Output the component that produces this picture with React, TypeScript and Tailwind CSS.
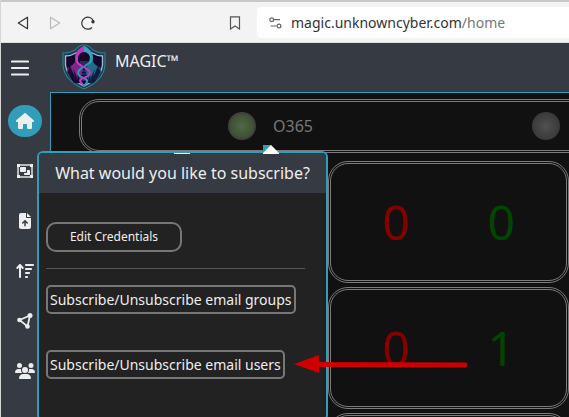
import type { ReactNode } from "react";
import {
  FaArrowUpWideShort,
  FaFileArrowUp,
  FaHouse,
  FaUsers,
} from "react-icons/fa6";

function Logo() {
  return (
    <svg width="44" height="46" viewBox="0 0 44 46" fill="none" aria-hidden="true">
      <path d="M1 9 Q8 9 13 6 Q17 1 22 1 Q27 1 31 6 Q36 9 43 9 V21 Q42 36 22 45 Q2 36 1 21Z" fill="#173d51" stroke="#2b7f96" strokeWidth="1.2" />
      <path d="M3.5 12 Q9 12 14 9 H30 Q35 12 40.5 12 V21 Q39 34 22 42 Q5 34 3.5 21Z" fill="#12082c" stroke="#aab4c6" strokeWidth="1.4" />
      <path d="M14 17 Q12 7 22 1.5 V8 Q15 11 16 19 L21 25 L18 35 L20 39 Q8 34 5 24 Q9 23 14 17Z" fill="#7b2a8c" />
      <path d="M30 17 Q32 7 22 1.5 V8 Q29 11 28 19 L23 25 L26 35 L24 39 Q36 34 39 24 Q35 23 30 17Z" fill="#246c8b" />
      <path d="M13.5 18 Q11 7 22 2 V8 Q15 10 16 19Z" fill="#c136c3" />
      <path d="M30.5 18 Q33 7 22 2 V8 Q29 10 28 19Z" fill="#37a3c0" />
      <ellipse cx="22" cy="15" rx="6.2" ry="7" fill="#160727" />
      <path d="M8 22L13 33L11 24L16 36L15 27L19 39H12L5 28Z" fill="#190735" />
      <path d="M36 22L31 33L33 24L28 36L29 27L25 39H32L39 28Z" fill="#0d1d42" />
      <path d="M18 18h9M18 20h8M19 27h7M18 30h8M19 36h6" stroke="#514594" />
      <path d="M28.5 14C31 22 16 22 16 29C16 34 27 34 25 38L22 42" stroke="#299bb7" strokeWidth="2" />
      <path d="M15 14C13 23 28 23 28 29C28 34 18 33 18 37L22 42" stroke="#c03cc4" strokeWidth="2" />
    </svg>
  );
}

function GroupIcon() {
  return (
    <svg width="16" height="14" viewBox="0 0 16 14" fill="none" aria-hidden="true">
      <rect x="1" y="1" width="14" height="12" stroke="#eee" strokeWidth="1.4" />
      <path d="M0 0h3v3H0zM13 0h3v3h-3zM0 11h3v3H0zM13 11h3v3h-3z" fill="#eee" />
      <rect x="3" y="3" width="6" height="5" rx=".8" fill="#eee" />
      <path d="M10 6h2.2a.8.8 0 0 1 .8.8V10.200a.8.8 0 0 1-.8.8H7.800a.8.8 0 0 1-.8-.8V9h2.200a.8.8 0 0 0 .8-.8Z" fill="#eee" />
    </svg>
  );
}

function NodesIcon() {
  return (
    <svg width="16" height="16" viewBox="0 0 16 16" fill="none" aria-hidden="true">
      <path d="M2.500 7L13 2.500L10.500 13.500Z" stroke="#eee" strokeWidth="1.800" />
      <circle cx="2.500" cy="7" r="2.300" fill="#eee" />
      <circle cx="13" cy="2.600" r="2.500" fill="#eee" />
      <circle cx="10.500" cy="13.500" r="2.300" fill="#eee" />
    </svg>
  );
}

function SideLink({ label, active, children }: { label: string; active?: boolean; children: ReactNode }) {
  return (
    <li className="flex h-[50px] items-center justify-center">
      <a
        href="#"
        aria-label={label}
        className={
          active
            ? "flex h-8 w-[34px] items-center justify-center rounded-full bg-[#319db8]"
            : "flex h-8 w-[34px] items-center justify-center"
        }
      >
        {children}
      </a>
    </li>
  );
}

function CountCard({ bad, good }: { bad?: number; good?: number }) {
  return (
    <section className="flex h-[122px] shrink-0 items-center justify-around rounded-[20px] border-[3px] border-double border-[#7b7b7b] px-3 text-5xl leading-none">
      <span className="w-[54px] text-center text-[#830000]">{bad}</span>
      <span className="w-[54px] text-center text-[#004500]">{good}</span>
    </section>
  );
}

export default function App() {
  return (
    <div className="relative flex h-screen flex-col overflow-hidden border-l border-[#d5d6d6] bg-[#111] font-['Noto_Sans',sans-serif] text-[#eee]">
      <div className="flex h-[43px] shrink-0 items-center border-b border-[#d9e0de] bg-[#f3f3f3] text-[#333]">
        <div className="flex h-full grow items-center border-t-2 border-[#c7c9c8] pt-px">
          <nav className="flex w-[228px] shrink-0 items-center pl-4">
            <button type="button" aria-label="Back">
              <svg width="12" height="14" viewBox="0 0 12 14" fill="none" stroke="#333" strokeWidth="1.2" strokeLinejoin="round"><path d="M10.5 1.2V12.8L1.3 7Z" /></svg>
            </button>
            <button type="button" aria-label="Forward" className="ml-5">
              <svg width="12" height="14" viewBox="0 0 12 14" fill="none" stroke="#bbb" strokeWidth="1.2" strokeLinejoin="round"><path d="M1.5 1.2V12.8L10.7 7Z" /></svg>
            </button>
            <button type="button" aria-label="Reload" className="ml-5">
              <svg width="14" height="14" viewBox="0 0 14 14" fill="none" stroke="#333" strokeWidth="1.2"><path d="M11 11.5A6 6 0 1 1 12.4 5" /><circle cx="12" cy="5.8" r="1.7" fill="#333" stroke="none" /></svg>
            </button>
          </nav>
          <button type="button" aria-label="Bookmark" className="mr-4">
            <svg width="12" height="14" viewBox="0 0 12 14" fill="none" stroke="#555" strokeWidth="1.2"><path d="M1.5 .8H10.5V13L6 10L1.5 13Z" /></svg>
          </button>
          <div className="flex h-[31px] grow items-center gap-[9px] rounded-l bg-white pl-3">
            <svg width="13" height="12" viewBox="0 0 13 12" fill="none" stroke="#666" strokeWidth="1.2" aria-hidden="true"><circle cx="2.7" cy="2.7" r="1.9" /><path d="M5 2.7h6M1.5 9h6" /><circle cx="10" cy="9" r="1.9" /></svg>
            <p className="text-sm leading-5">magic.unknowncyber.com<span className="text-[#777]">/home</span></p>
          </div>
        </div>
      </div>

      <header className="flex h-[49px] shrink-0 items-start bg-[#363a42]">
        <button type="button" aria-label="Menu" className="ml-2.5 mt-[17px]">
          <svg width="18" height="16" viewBox="0 0 18 16" aria-hidden="true"><path d="M1 1.500H17M1 8H17M1 14.500H17" stroke="#eee" strokeWidth="2.200" strokeLinecap="round" /></svg>
        </button>
        <div className="ml-[33px] mt-px"><Logo /></div>
        <h1 className="ml-[9px] mt-1.5 text-base leading-6">MAGIC™</h1>
      </header>

      <div className="flex min-h-0 grow">
        <nav className="w-[49px] shrink-0 bg-[#363a42] pr-0.5 pt-1">
          <ul>
            <SideLink label="Home" active><FaHouse size={18} /></SideLink>
            <SideLink label="Groups"><GroupIcon /></SideLink>
            <SideLink label="Upload"><FaFileArrowUp size={16} /></SideLink>
            <SideLink label="Sort"><FaArrowUpWideShort size={18} /></SideLink>
            <SideLink label="Relations"><NodesIcon /></SideLink>
            <SideLink label="Users"><FaUsers size={20} /></SideLink>
          </ul>
        </nav>

        <main className="flex min-w-0 grow flex-col gap-2 overflow-hidden border-l border-t border-[#319db8] pl-7 pt-1.5">
          <section className="-mr-8 flex h-[54px] shrink-0 items-center rounded-[20px] border-[3px] border-double border-[#7b7b7b] pl-[146px] pr-[38px]">
            <span className="size-7 rounded-full border-2 border-[#414141] bg-radial from-[#526649] to-[#344a28]" />
            <span className="ml-[17px] grow text-base leading-6 text-[#777]">O365</span>
            <span className="size-7 rounded-full bg-radial from-[#505050] to-[#303030]" />
          </section>
          <div className="flex flex-col gap-1 pl-[249px]">
            <CountCard bad={0} good={0} />
            <CountCard bad={0} good={1} />
            <CountCard />
          </div>
        </main>
      </div>

      <div role="dialog" aria-labelledby="subscribe-title" className="absolute -bottom-1 left-9 top-[151px] w-[291px] rounded-md border-2 border-[#319db8] bg-[#222]">
        <svg className="absolute -top-2 left-[224px]" width="16" height="9" viewBox="0 0 16 9" aria-hidden="true"><path d="M0 0H8V8H0Z" fill="#319db8" /><path d="M0 9V8L8 0L16 8V9Z" fill="#fff" /></svg>
        <span className="absolute left-[135px] top-0 h-px w-4 bg-white" />
        <h2 id="subscribe-title" className="h-10 rounded-t bg-[#363a42] text-center text-base leading-10">What would you like to subscribe?</h2>
        <div className="flex flex-col items-start pl-[7px] pr-[21px] pt-[29px]">
          <button type="button" className="h-[30px] w-[136px] rounded-[10px] border-2 border-[#777] text-xs">Edit Credentials</button>
          <hr className="mb-4 mt-4 w-full border-[#565656]" />
          <button type="button" className="h-[29px] rounded-[5px] border-2 border-[#777] px-0.5 text-sm">Subscribe/Unsubscribe email groups</button>
          <button type="button" className="mt-9 h-[29px] rounded-[5px] border-2 border-[#777] px-0.5 text-sm">Subscribe/Unsubscribe email users</button>
        </div>
      </div>

      <svg className="pointer-events-none absolute left-[293px] top-[354px]" width="174" height="20" viewBox="0 0 174 20" aria-hidden="true">
        <path d="M24 10.5L171 11" stroke="#cc0000" strokeWidth="5" strokeLinecap="round" />
        <path d="M0 10L25 1V19Z" fill="#cc0000" />
      </svg>
    </div>
  );
}
